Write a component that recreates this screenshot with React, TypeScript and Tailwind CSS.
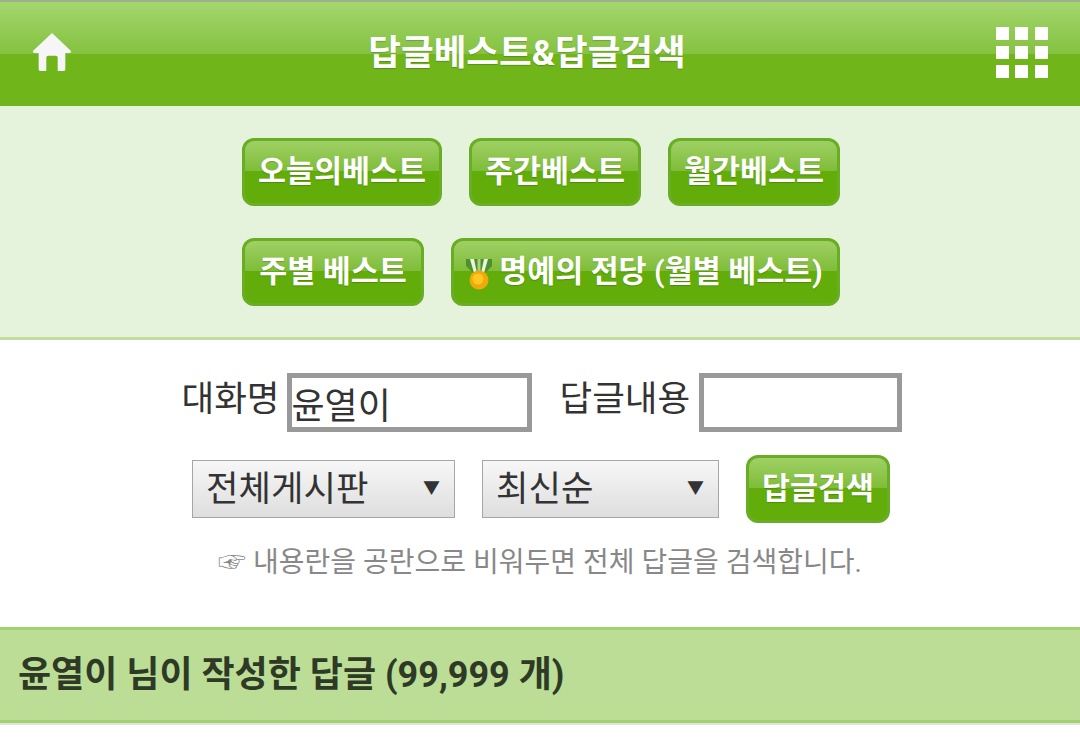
const FONT = "font-['Roboto','Noto_Sans_CJK_KR',sans-serif]";

function GreenButton({ label, width, icon }: { label: string; width: string; icon?: boolean }) {
  return (
    <button
      className={`${width} h-[68px] flex items-center justify-center rounded-[12px] border-[3px] border-[#69ad24] bg-[linear-gradient(#9fd065,#7fbd38_48%,#62ad0a_48%,#62ad0a)] text-white font-bold text-[30.400px] [text-shadow:0_1px_1px_rgba(0,0,0,0.2)]`}
    >
      {icon && (
        <svg width="28" height="32" viewBox="0 0 28 32" className="mr-[6px] ml-[-3px] mt-[4px] shrink-0">
          <path d="M1 1h26v7l-8 8h-10l-8-8z" fill="#4f8f30" />
          <path d="M5 1h4l3 14h-3zM19 1h4l-4 14h-3z" fill="#e8f5d8" />
          <path d="M12.500 1h3v13h-3z" fill="#a9d27a" />
          <circle cx="14" cy="22" r="9.500" fill="#efa90c" />
          <circle cx="13" cy="21" r="5.500" fill="#ffc91f" />
        </svg>
      )}
      {label}
    </button>
  );
}

function FakeSelect({ label, width }: { label: string; width: string }) {
  return (
    <div
      className={`${width} h-[58px] flex items-center justify-between pl-[13px] pr-[14px] border border-[#a6a6a6] bg-gradient-to-b from-[#f7f7f7] to-[#dedede] text-[#333] text-[35.300px]`}
    >
      <span>{label}</span>
      <span className="text-[17px] text-[#333]">▼</span>
    </div>
  );
}

export default function App() {
  return (
    <div className={`${FONT} h-[743px] w-[1080px] overflow-hidden bg-white`}>
      <header className="h-[106px] flex items-center justify-between border-t-[2px] border-[#9db08a] bg-[linear-gradient(#a4d66e,#84c240_50%,#70b51a_50%,#70b51a)] pl-[32px] pr-[32px]">
        <svg width="40" height="40" viewBox="0 0 42 42" className="mb-[5px]">
          <path
            d="M21 1 L41 20 Q41.500 22 39 22 L35 22 L35 39 Q35 41 33 41 L27 41 L27 27 Q27 25 25 25 L17 25 Q15 25 15 27 L15 41 L9 41 Q7 41 7 39 L7 22 L3 22 Q0.500 22 1 20 Z"
            fill="#f6f6f6"
          />
        </svg>
        <h1 className="mr-[14px] text-white font-bold text-[35.500px] [text-shadow:0_1px_1px_rgba(0,0,0,0.2)]">
          답글베스트&amp;답글검색
        </h1>
        <div className="grid grid-cols-3 gap-[6px] w-[52px] mb-[3px]">
          {Array.from({ length: 9 }).map((_, i) => (
            <span key={i} className="w-[13px] h-[13px] bg-white" />
          ))}
        </div>
      </header>

      <section className="h-[234px] bg-[#e6f3dc] border-b-[3px] border-[#c1dd9c] pt-[32px] flex flex-col items-center gap-[32px]">
        <div className="flex gap-[27px] w-[598px] ml-[2px]">
          <GreenButton label="오늘의베스트" width="w-[200px]" />
          <GreenButton label="주간베스트" width="w-[172px]" />
          <GreenButton label="월간베스트" width="w-[172px]" />
        </div>
        <div className="flex gap-[27px] w-[598px] ml-[2px]">
          <GreenButton label="주별 베스트" width="w-[182px]" />
          <GreenButton label="명예의 전당 (월별 베스트)" width="w-[389px]" icon />
        </div>
      </section>

      <section className="h-[287px] pt-[33px] flex flex-col items-center">
        <div className="flex items-center text-[35.500px] text-[#333] w-[722px] ml-[5px]">
          <span className="mb-[5px] w-[101px]">대화명</span>
          <input
            readOnly
            value="윤열이"
            className="ml-[4px] w-[245px] h-[59px] border-[5px] border-[#999] px-0 text-[36px] text-[#333] outline-none"
          />
          <span className="ml-[28px] mb-[5px] w-[135px]">답글내용</span>
          <input
            readOnly
            value=""
            className="ml-[4px] w-[203px] h-[59px] border-[5px] border-[#999] outline-none"
          />
        </div>
        <div className="flex items-center mt-[23px] ml-[2px]">
          <FakeSelect label="전체게시판" width="w-[263px]" />
          <div className="w-[27px]" />
          <FakeSelect label="최신순" width="w-[237px]" />
          <div className="w-[27px]" />
          <GreenButton label="답글검색" width="w-[144px]" />
        </div>
        <p className="mt-[19px] text-[28px] text-[#888]">☞ 내용란을 공란으로 비워두면 전체 답글을 검색합니다.</p>
      </section>

      <div className="h-[96px] flex items-center pl-[18px] border-y-[3px] border-[#a3d070] bg-[#bcdd96] text-[#2e3a26] font-bold text-[36px]">
        윤열이 님이 작성한 답글 (99,999 개)
      </div>
      <div className="h-[2px] bg-[#dfe5da]" />
    </div>
  );
}
